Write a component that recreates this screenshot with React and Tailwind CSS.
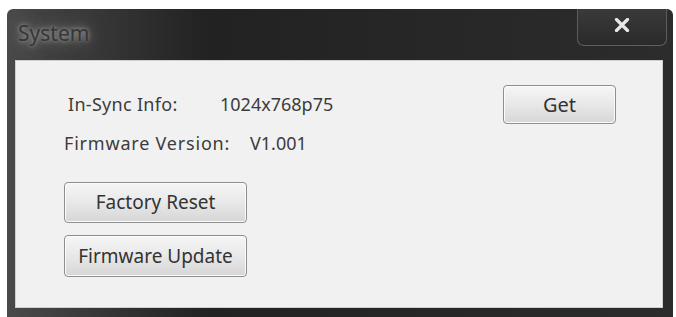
import React from "react";

function WinButton({ children, className }) {
  return (
    <button
      className={
        "rounded-[4px] border border-[#8e8e8e] bg-gradient-to-b from-[#f6f6f6] via-[#e8e8e8] to-[#d6d6d6] text-[#333] shadow-[inset_0_0_0_1px_#fbfbfb] " +
        className
      }
    >
      {children}
    </button>
  );
}

export default function App() {
  return (
    <div
      className="w-[676px] h-[317px] bg-white pt-[9px] pl-[7px] overflow-hidden"
      style={{ fontFamily: '"Noto Sans", "Open Sans", sans-serif' }}
    >
      <div className="w-[666px] h-[308px] rounded-t-[6px] bg-gradient-to-r from-[#4a4a4a] via-[#222] via-30% to-[#2c2c2c] flex flex-col">
        {/* title bar */}
        <div className="h-[51px] flex items-start justify-between">
          <div className="mt-[8px] ml-[9px] px-[2px] text-[21px] leading-[32px] text-[#363636] [text-shadow:0_0_4px_#9c9c9c,0_0_10px_#888,0_0_18px_#777]">
            System
          </div>
          <div className="mr-[6px] w-[90px] h-[37px] rounded-b-[7px] border border-t-0 border-[#5e5e5e] bg-gradient-to-b from-[#3a3a3a] to-[#2a2a2a] flex items-center justify-center">
            <svg width="16" height="14" viewBox="0 0 16 14" className="mt-[-4px]">
              <path d="M2.5 1.5 L13.5 12.5 M13.5 1.5 L2.5 12.5" stroke="#e8e8e8" strokeWidth="3.2" strokeLinecap="round" />
            </svg>
          </div>
        </div>
        {/* content */}
        <div className="ml-[8px] w-[648px] h-[248px] bg-[#f1f1f1] border border-[#cfcfcf] pl-[48px] pt-[24px] text-[18px] text-[#3c3c3c]">
          <div className="h-[39px] flex items-center">
            <span className="ml-[4px] w-[152px] tracking-[0.3px]">In-Sync Info:</span>
            <span className="w-[283px]">1024x768p75</span>
            <WinButton className="w-[113px] h-[39px] text-[20px]">Get</WinButton>
          </div>
          <div className="mt-[8px] h-[22px] flex items-center">
            <span className="w-[186px] tracking-[0.8px]">Firmware Version:</span>
            <span>V1.001</span>
          </div>
          <div className="mt-[28px] flex flex-col gap-[12px]">
            <WinButton className="w-[183px] h-[41px] text-[19px]">Factory Reset</WinButton>
            <WinButton className="w-[183px] h-[42px] text-[19px]">Firmware Update</WinButton>
          </div>
        </div>
      </div>
    </div>
  );
}
